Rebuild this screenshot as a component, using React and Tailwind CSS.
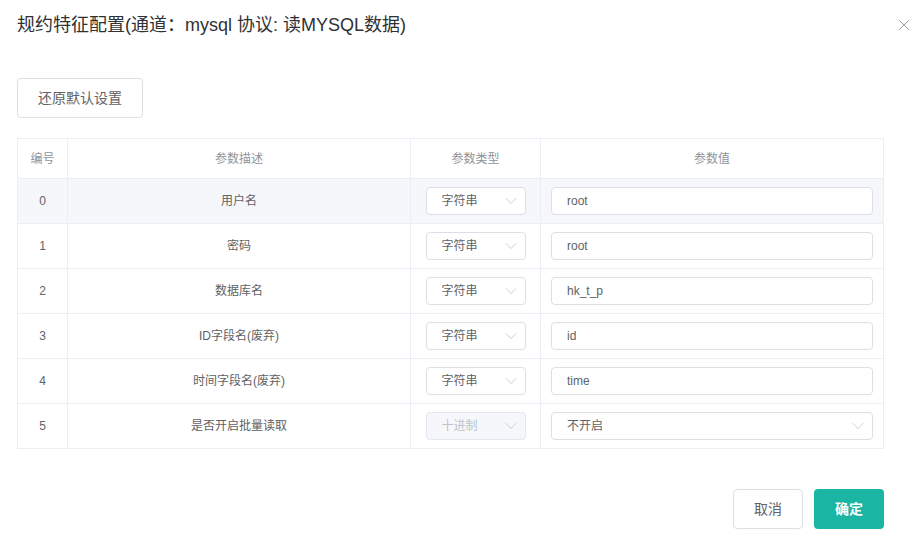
import { ChevronDown, X } from 'lucide-react';

const rows = [
  { id: 0, desc: '用户名', type: '字符串', value: 'root' },
  { id: 1, desc: '密码', type: '字符串', value: 'root' },
  { id: 2, desc: '数据库名', type: '字符串', value: 'hk_t_p' },
  { id: 3, desc: 'ID字段名(废弃)', type: '字符串', value: 'id' },
  { id: 4, desc: '时间字段名(废弃)', type: '字符串', value: 'time' },
  { id: 5, desc: '是否开启批量读取', type: '十进制', value: '不开启', disabled: true, select: true },
];

const font = { fontFamily: '"Liberation Sans", "Noto Sans CJK SC", sans-serif' };

const TypeSelect = ({ label, disabled }) => (
  <div
    className={`flex h-[28px] w-[100px] items-center justify-between rounded-[4px] border pl-[15px] pr-[4px] text-[12px] ${
      disabled ? 'bg-[#f5f7fa] text-[#c0c4cc] border-[#e4e7ed]' : 'bg-white text-[#606266] border-[#dcdfe6]'
    }`}
  >
    <span>{label}</span>
    <ChevronDown className="h-[20px] w-[20px] text-[#c0c4cc]" strokeWidth={1} />
  </div>
);

export default function App() {
  return (
    <div className="relative h-[539px] w-[921px] bg-white" style={font}>
      <div className="flex items-center justify-between pl-[17px] pr-[8px] pt-[13px]">
        <h1 className="text-[18px] leading-[24px] text-[#303133]">规约特征配置(通道：mysql 协议: 读MYSQL数据)</h1>
        <X className="h-[18px] w-[18px] text-[#909399]" strokeWidth={1.2} />
      </div>

      <div className="px-[17px] pt-[41px]">
        <button className="h-[40px] w-[126px] rounded-[4px] border border-[#dcdfe6] bg-white text-[14px] text-[#606266]">
          还原默认设置
        </button>

        <div className="mt-[20px] w-[867px] border border-[#ebeef5] text-[12px]">
          <div className="flex h-[40px] items-center border-b border-[#ebeef5] text-[#909399]">
            <div className="flex h-full w-[50px] items-center justify-center border-r border-[#ebeef5]">编号</div>
            <div className="flex h-full w-[343px] items-center justify-center border-r border-[#ebeef5]">参数描述</div>
            <div className="flex h-full w-[130px] items-center justify-center border-r border-[#ebeef5]">参数类型</div>
            <div className="flex h-full flex-1 items-center justify-center">参数值</div>
          </div>
          {rows.map((r, i) => (
            <div
              key={r.id}
              className={`flex items-center text-[#606266] ${i < rows.length - 1 ? 'h-[45px] border-b border-[#ebeef5]' : 'h-[44px]'} ${
                i === 0 ? 'bg-[#f5f7fa]' : 'bg-white'
              }`}
            >
              <div className="flex h-full w-[50px] items-center justify-center border-r border-[#ebeef5]">{r.id}</div>
              <div className="flex h-full w-[343px] items-center justify-center border-r border-[#ebeef5]">{r.desc}</div>
              <div className="flex h-full w-[130px] items-center justify-center border-r border-[#ebeef5]">
                <TypeSelect label={r.type} disabled={r.disabled} />
              </div>
              <div className="flex h-full flex-1 items-center px-[10px]">
                <div className="flex h-[28px] w-full items-center justify-between rounded-[4px] border border-[#dcdfe6] bg-white pl-[15px] pr-[4px] text-[12px] text-[#606266]">
                  <span>{r.value}</span>
                  {r.select && <ChevronDown className="h-[20px] w-[20px] text-[#c0c4cc]" strokeWidth={1} />}
                </div>
              </div>
            </div>
          ))}
        </div>

        <div className="mt-[40px] flex w-[867px] justify-end gap-[11px]">
          <button className="h-[40px] w-[70px] rounded-[4px] border border-[#dcdfe6] bg-white text-[14px] text-[#606266]">
            取消
          </button>
          <button className="h-[40px] w-[70px] rounded-[4px] bg-[#1ab5a3] text-[14px] font-bold text-white">确定</button>
        </div>
      </div>
    </div>
  );
}
